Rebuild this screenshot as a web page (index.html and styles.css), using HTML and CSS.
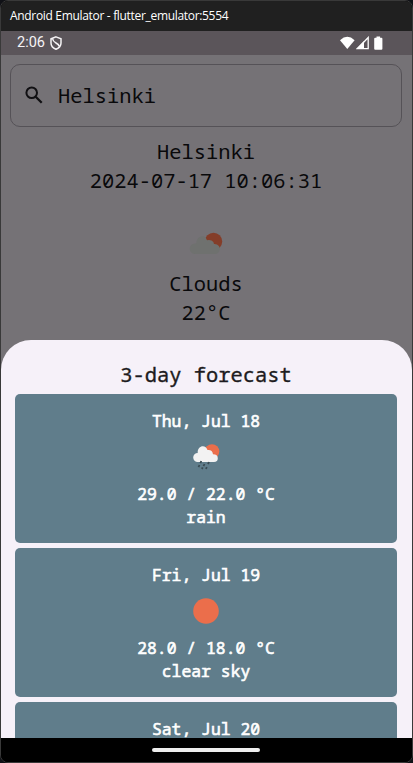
FILE: index.html
```html
<!DOCTYPE html>
<html lang="en">
<head>
<meta charset="utf-8">
<title>Android Emulator</title>
<link rel="stylesheet" href="styles.css">
</head>
<body>
<div class="window">
  <header class="titlebar">Android Emulator - flutter_emulator:5554</header>
  <div class="statusbar">
    <span class="clock">2:06</span>
    <svg class="shield" width="12" height="14" viewBox="0 0 12 14"><path d="M6 .9 11 2.700V7c0 3-2.100 5.100-5 6.200C3.100 12.100 1 10 1 7V2.700zM2.500 2.500Q3 5.500 6 7T9.300 10.500" fill="none" stroke="#f5f3f5" stroke-width="1.500"/></svg>
    <svg class="signals" width="46" height="14" viewBox="0 0 46 14">
      <path d="M0 4.200Q7.300-2.600 14.600 4.200L7.300 13z" fill="#fff"/>
      <path d="M28.200 1.500V12.700H17.500z" fill="none" stroke="#fff" stroke-width="1.300"/>
      <path d="M24 5V13H16z" fill="#fff"/>
      <path d="M36.500 .5h3.600v1.200h1.300q1 0 1 1v10q0 1-1 1h-6.200q-1 0-1-1v-10q0-1 1-1H36.500z" fill="#fff"/>
    </svg>
  </div>
  <main class="app">
    <div class="search">
      <svg class="glass" width="18" height="18" viewBox="0 0 18 18"><circle cx="6.700" cy="6.700" r="5.300" fill="none" stroke="#111013" stroke-width="2"/><path d="M10.700 10.700 16.700 16.700" stroke="#111013" stroke-width="2.300"/></svg>
      <span>Helsinki</span>
    </div>
    <div class="current">
      <div>Helsinki</div>
      <div>2024-07-17 10:06:31</div>
      <svg class="now-icon" width="34" height="24" viewBox="0 0 34 24"><circle cx="24.500" cy="9.500" r="8.700" fill="#843d29"/><path d="M6 22a5.300 5.300 0 0 1 0-10.600Q6.700 11.300 7.200 11.500C7.500 5.700 12 3.300 15.500 4.700Q17 5.400 18 8.200 20.500 7.600 22.500 8.500 25 9.500 25 12C29 11.700 31.500 15 30.700 18Q29.800 22 26 22z" fill="#6f716f"/></svg>
      <div>Clouds</div>
      <div>22°C</div>
    </div>
  </main>
  <section class="backdrop">
    <div class="sheet">
      <h1>3-day forecast</h1>
      <div class="card">
        <div class="day">Thu, Jul 18</div>
        <svg class="icon" width="28" height="28" viewBox="0 0 28 28"><circle cx="20" cy="8.500" r="7.300" fill="#eb6e4b"/><path d="M5.700 19a4.500 4.500 0 0 1 0-9C5.200 2.100 14 1.100 15.500 7Q20.500 6.500 21 11.300 25.800 11.500 25.800 15.200 25.800 19 22 19z" fill="#f2f2f2"/><path d="M9.300 18l-1 2.200M17 19l-1 2.200M7.500 22l-1 2.200M12.500 21l-1 2.200M10.700 24.300l-.8 1.700M14.800 24.200l-.8 1.800" stroke="#394b53" stroke-width="1.800"/></svg>
        <div>29.0 / 22.0 °C</div>
        <div>rain</div>
      </div>
      <div class="card">
        <div class="day">Fri, Jul 19</div>
        <svg class="icon" width="28" height="28" viewBox="0 0 28 28"><circle cx="14" cy="14" r="12.800" fill="#eb6e4b"/></svg>
        <div>28.0 / 18.0 °C</div>
        <div>clear sky</div>
      </div>
      <div class="card">
        <div class="day">Sat, Jul 20</div>
      </div>
    </div>
  </section>
  <nav class="navbar"><div class="handle"></div></nav>
</div>
</body>
</html>
```
FILE: styles.css
```css
* { box-sizing: border-box; }
html { background: #101116; overflow: hidden; }
body { margin: 0; }
.window {
  width: 413px;
  height: 763px;
  display: flex;
  flex-direction: column;
  overflow: hidden;
  border: 1px solid #393939;
  border-radius: 8px;
  background: #000;
  font-family: "Noto Sans Mono", "DejaVu Sans Mono", monospace;
  font-size: 20.4px;
  color: #09090b;
}
.titlebar {
  height: 30px;
  flex: none;
  padding-left: 9px;
  background: #202020;
  color: #fff;
  font: 12px/30px "Open Sans", sans-serif;
  letter-spacing: -0.32px;
  white-space: nowrap;
}
.statusbar {
  height: 24px;
  flex: none;
  display: flex;
  align-items: center;
  padding: 0 26px 1px 16px;
  background: #5b555a;
  color: #f5f3f5;
  font: 14.5px/24px Roboto, sans-serif;
}
.clock { padding-top: 1px; }
.shield { margin-left: 5px; }
.signals { margin-left: auto; }
.app {
  height: 285px;
  flex: none;
  padding: 9px 10px 0 9px;
  background: #757276;
}
.search {
  height: 63px;
  display: flex;
  align-items: center;
  gap: 15px;
  padding: 0 0 1px 14px;
  border: 1.5px solid #555257;
  border-radius: 10px;
}
.current {
  display: flex;
  flex-direction: column;
  align-items: center;
  padding-top: 10px;
  line-height: 29px;
}
.now-icon { margin: 37px 0 13px; }
.backdrop {
  height: 398px;
  flex: none;
  overflow: hidden;
  background: #757276;
}
.sheet {
  height: 398px;
  display: flex;
  flex-direction: column;
  gap: 5px;
  overflow: hidden;
  padding: 20px 15px 0 14px;
  border-radius: 30px 30px 0 0;
  background: #f6f1f9;
}
h1 {
  height: 29px;
  flex: none;
  margin: 0;
  color: #1d1b20;
  text-align: center;
  font-size: 20.4px;
  line-height: 29px;
  font-weight: 400;
  -webkit-text-stroke: 0.35px currentColor;
}
.card {
  height: 149px;
  flex: none;
  display: flex;
  flex-direction: column;
  align-items: center;
  padding-top: 15px;
  border-radius: 5px;
  background: #607d8b;
  color: #fff;
  font-size: 16.4px;
  line-height: 23px;
  -webkit-text-stroke: 0.6px currentColor;
}
.icon { margin: 11px 0; }
.navbar {
  flex: 1;
  display: flex;
  justify-content: center;
  padding: 10px 1px 0 0;
  background: #000;
}
.handle { width: 108px; height: 4px; border-radius: 2px; background: #eee; }
```
